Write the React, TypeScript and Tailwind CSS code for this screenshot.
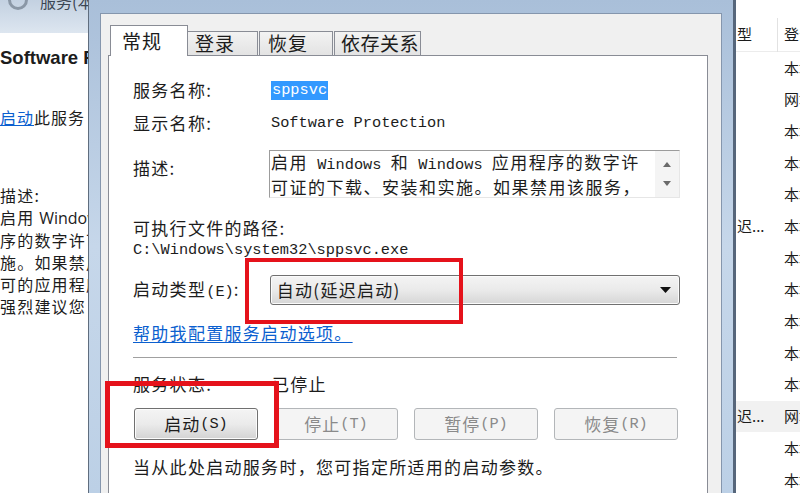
import React from "react";

const cjk = "font-['Noto_Sans_CJK_SC',sans-serif]";
const mono = "font-['Liberation_Mono','Noto_Sans_CJK_SC',monospace]";

const Mono = ({ children }: { children: React.ReactNode }) => (
  <span className={`${mono} text-[15.3px] tracking-normal`}>{children}</span>
);

const listRows = [
  { a: "", b: "本" },
  { a: "", b: "网" },
  { a: "", b: "本" },
  { a: "", b: "本" },
  { a: "", b: "本" },
  { a: "迟...", b: "本" },
  { a: "", b: "本" },
  { a: "", b: "本" },
  { a: "", b: "本" },
  { a: "", b: "本" },
  { a: "", b: "本" },
  { a: "迟...", b: "网", sel: true },
  { a: "", b: "本" },
  { a: "", b: "本" },
];

const btn =
  "w-[124px] h-[32px] rounded-[3px] border flex items-center justify-center text-[17px] tracking-[1px]";

const App = () => {
  return (
    <div className={`relative w-[800px] h-[493px] overflow-hidden flex bg-white text-[#1c1c1c] ${cjk}`}>
      {/* services pane behind, left */}
      <div className="w-[88px] shrink-0 flex flex-col overflow-hidden whitespace-nowrap">
        <div className="h-[33px] bg-gradient-to-b from-[#c3d1e1] to-[#dde6f0] flex items-start">
          <div className="shrink-0 ml-[8px] -mt-[10px] w-[20px] h-[20px] rounded-full border-[3px] border-[#8a97a6]" />
          <span className="ml-[12px] -mt-[11px] text-[16px] text-[#3a4654]">服务(本地)</span>
        </div>
        <div className="mt-[13px] h-[24px] flex items-center font-['Liberation_Sans',sans-serif] font-bold text-[18.5px]">
          Software Protection
        </div>
        <div className="mt-[35px] h-[24px] flex items-center text-[16px] tracking-[1px]">
          <span className="text-[#0b5fcf] underline">启动</span>此服务
        </div>
        <div className="mt-[55px] flex flex-col text-[16px] tracking-[1.2px] leading-[22px]">
          <span>描述:</span>
          <span>
            启用 <span className="font-['Open_Sans',sans-serif] tracking-normal">Windows</span>
          </span>
          <span>序的数字许可</span>
          <span>施。如果禁用</span>
          <span>可的应用程序</span>
          <span>强烈建议您</span>
        </div>
      </div>

      {/* dialog window */}
      <div className="w-[648px] shrink-0 flex flex-col border-l border-l-[#5f6d7e] border-r-[3px] border-r-[#56667b] bg-gradient-to-b from-[#a9bfd9] via-[#c6d7ea] to-[#bcd0e6] pl-[11px] pr-[11px] pt-[13px]">
        <div className="flex-1 flex flex-col border border-[#8596ad] border-b-0 bg-[#f0f0f0] pl-[7px] pr-[13px] pt-[11px]">
          {/* tabs */}
          <div className="relative z-10 -mb-px flex items-end h-[31px] text-[19px] tracking-[1px]">
            <div className="ml-[2px] w-[78px] h-[31px] bg-white border border-b-0 border-[#898c95] flex items-start pl-[11px] leading-[30px]">
              常规
            </div>
            <div className="w-[70px] h-[25px] bg-gradient-to-b from-[#f3f3f3] to-[#e3e3e3] border border-l-0 border-[#898c95] flex items-center pl-[7px]">
              登录
            </div>
            <div className="ml-[1px] w-[74px] h-[25px] bg-gradient-to-b from-[#f3f3f3] to-[#e3e3e3] border border-[#898c95] flex items-center pl-[8px]">
              恢复
            </div>
            <div className="ml-[1px] w-[87px] h-[25px] bg-gradient-to-b from-[#f3f3f3] to-[#e3e3e3] border border-[#898c95] flex items-center pl-[6px] tracking-[0.5px]">
              依存关系
            </div>
          </div>

          {/* tab page */}
          <div className="flex-1 bg-white border border-b-0 border-[#898c95] pl-[24px] pr-[27px] pt-[22px] flex flex-col text-[17px] tracking-[1.3px]">
            <div className="flex h-[24px] items-center">
              <div className="w-[138px]">服务名称:</div>
              <span className={`${mono} text-[15.3px] tracking-normal bg-[#3399ff] text-white leading-[19px] px-[1px]`}>
                sppsvc
              </span>
            </div>
            <div className="mt-[9px] flex h-[24px] items-center">
              <div className="w-[138px]">显示名称:</div>
              <Mono>Software Protection</Mono>
            </div>
            <div className="mt-[15px] flex h-[48px]">
              <div className="w-[136px] pt-[5px]">描述:</div>
              <div className="flex-1 flex border-t border-l border-[#9c9c9c] border-r border-b border-r-[#e6e6e6] border-b-[#e6e6e6] overflow-hidden">
                <div className="flex-1 pl-[1px] text-[17px] tracking-[1.5px] leading-[21px] whitespace-nowrap overflow-hidden">
                  <div>
                    启用<Mono> Windows </Mono>和<Mono> Windows </Mono>应用程序的数字许
                  </div>
                  <div>可证的下载、安装和实施。如果禁用该服务，</div>
                </div>
                <div className="w-[24px] bg-[#f4f4f4] flex flex-col items-center justify-between py-[11px]">
                  <svg width="8" height="5" viewBox="0 0 8 5">
                    <path d="M0 5 L4 0 L8 5 Z" fill="#6b6b6b" />
                  </svg>
                  <svg width="8" height="5" viewBox="0 0 8 5">
                    <path d="M0 0 L8 0 L4 5 Z" fill="#6b6b6b" />
                  </svg>
                </div>
              </div>
            </div>
            <div className="mt-[18px] h-[24px] flex items-center">可执行文件的路径:</div>
            <div className="h-[20px] flex items-center">
              <Mono>C:\Windows\system32\sppsvc.exe</Mono>
            </div>
            <div className="mt-[15px] flex h-[30px] items-center">
              <div className="w-[137px]">
                启动类型<Mono>(E)</Mono>:
              </div>
              <div className="w-[411px] h-[30px] rounded-[3px] border border-[#707070] bg-gradient-to-b from-[#f4f4f4] via-[#eaeaea] to-[#d6d6d6] shadow-[inset_0_0_0_1px_#fbfbfb] flex items-center justify-between pl-[6px] pr-[8px]">
                <span>自动(延迟启动)</span>
                <svg width="11" height="6" viewBox="0 0 11 6">
                  <path d="M0 0 L11 0 L5.5 6 Z" fill="#111" />
                </svg>
              </div>
            </div>
            <div className="mt-[16px] h-[24px] flex items-center">
              <span className="text-[#0b5fcf] underline underline-offset-2">帮助我配置服务启动选项。</span>
            </div>
            <div className="mt-[12px] w-[544px] h-[2px] border-t border-[#a0a0a0] border-b border-b-white" />
            <div className="mt-[13px] flex h-[24px] items-center">
              <div className="w-[139px]">服务状态:</div>
              <span>已停止</span>
            </div>
            <div className="mt-[12px] flex gap-[16px] pl-[1px]">
              <div className={`${btn} border-[#707070] bg-gradient-to-b from-[#f4f4f4] via-[#ebebeb] to-[#d3d3d3] shadow-[inset_0_0_0_1px_#fcfcfc]`}>
                启动<Mono>(S)</Mono>
              </div>
              <div className={`${btn} border-[#b3b6b9] bg-[#f4f4f4] text-[#8a8a8a]`}>
                停止<Mono>(T)</Mono>
              </div>
              <div className={`${btn} border-[#b3b6b9] bg-[#f4f4f4] text-[#8a8a8a]`}>
                暂停<Mono>(P)</Mono>
              </div>
              <div className={`${btn} border-[#b3b6b9] bg-[#f4f4f4] text-[#8a8a8a]`}>
                恢复<Mono>(R)</Mono>
              </div>
            </div>
            <div className="mt-[15px] h-[24px] flex items-center whitespace-nowrap">
              当从此处启动服务时，您可指定所适用的启动参数。
            </div>
          </div>
        </div>
      </div>

      {/* services list behind, right */}
      <div className="flex-1 flex flex-col overflow-hidden whitespace-nowrap text-[15px]">
        <div className="h-[22px] bg-gradient-to-b from-[#9db5d2] to-[#b5c9df]" />
        <div className="mt-[18px] h-[34px] flex items-center border-b border-[#ececec]">
          <span className="shrink-0 w-[41px] pl-[1px]">型</span>
          <span className="shrink-0 w-px h-[34px] bg-[#e2e2e2]" />
          <span className="shrink-0 pl-[6px]">登录</span>
        </div>
        {listRows.map((r, i) => (
          <div
            key={i}
            className={`h-[31.7px] shrink-0 flex items-center ${r.sel ? "bg-[#f1f1f1]" : ""}`}
          >
            <span className="shrink-0 w-[48px] pl-[1px]">{r.a}</span>
            <span className="shrink-0">{r.b}地</span>
          </div>
        ))}
      </div>

      {/* red annotation boxes */}
      <div className="absolute left-[245px] top-[258px] w-[218px] h-[66px] border-[4px] border-[#e5121b]" />
      <div className="absolute left-[105px] top-[381px] w-[174px] h-[67px] border-[5px] border-[#e5121b]" />
    </div>
  );
};

export default App;
